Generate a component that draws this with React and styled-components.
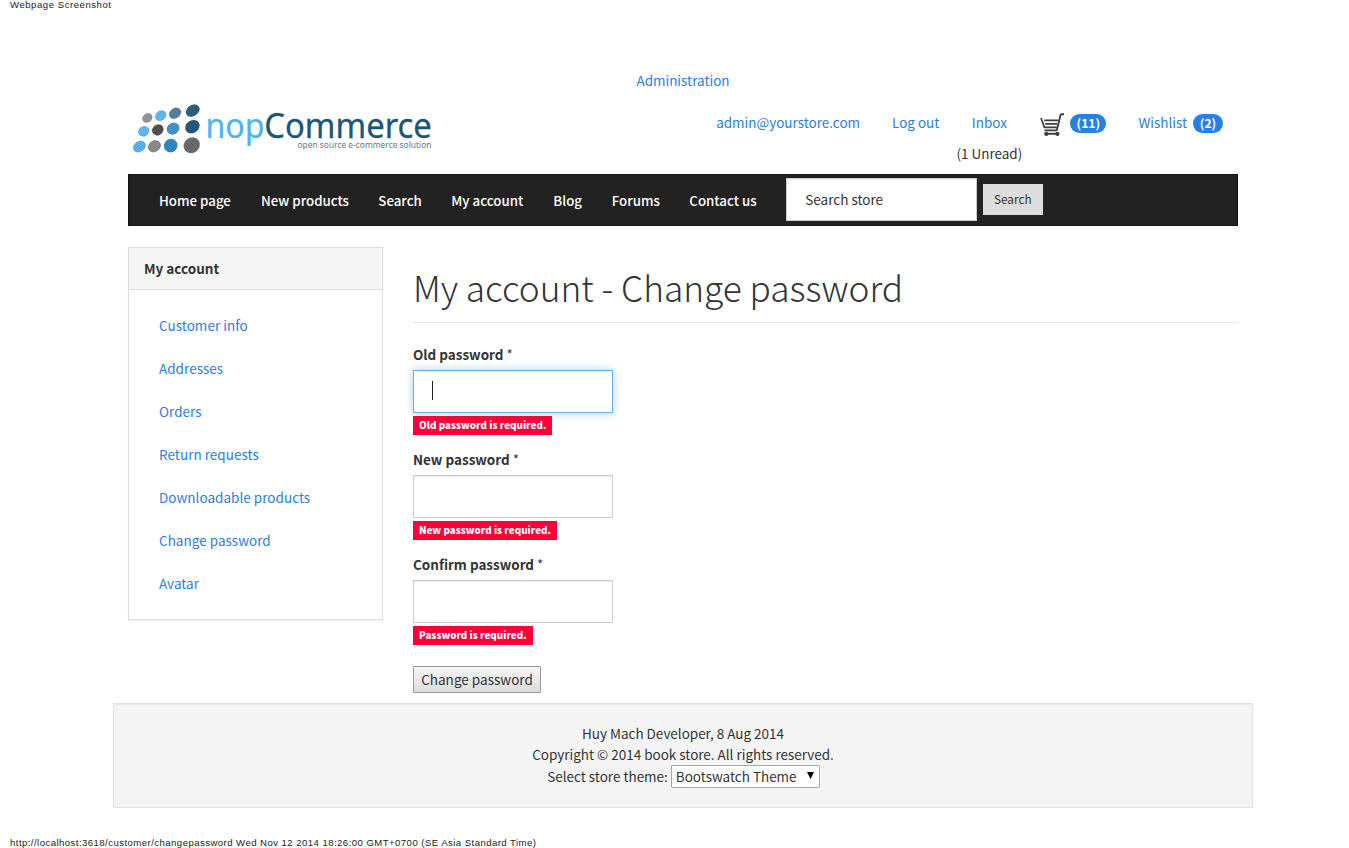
import React from 'react';
import styled, { createGlobalStyle } from 'styled-components';

const GlobalStyle = createGlobalStyle`
  * { box-sizing: border-box; }
  body {
    margin: 0;
    background: #fff;
    color: #333;
    font-family: 'Noto Sans CJK SC', 'Open Sans', sans-serif;
    font-size: 13.48px;
    line-height: 21px;
    overflow: hidden;
  }
  button, input, select { font-family: inherit; color: #333; }
`;

const Page = styled.div`
  display: flex;
  flex-direction: column;
  width: 1366px;
  height: 848px;
`;

const PrintNote = styled.div`
  padding-left: 10px;
  font-family: 'Liberation Sans', Arial, sans-serif;
  font-size: 9.6px;
  line-height: 10px;
  letter-spacing: ${(p) => p.$tracking}px;
  white-space: nowrap;
  color: #222;
`;

const Container = styled.div`
  width: 1140px;
  margin: 0 auto;
  padding: 0 15px;
`;

const AdminBar = styled.div`
  display: flex;
  justify-content: center;
  padding-top: 60px;
`;

const Link = styled.a`
  color: #2b7de2;
  text-decoration: none;
  white-space: nowrap;
  letter-spacing: ${(p) => (p.$loose ? '0.04px' : 'normal')};
`;

const Header = styled.header`
  display: flex;
  justify-content: space-between;
  align-items: flex-start;
  height: 83px;
  padding: 11px 15px 0 5px;
`;

const Logo = styled.svg`
  display: block;
  width: 300px;
  height: 54px;
  overflow: visible;
`;

const HeaderLinks = styled.nav`
  display: flex;
  align-items: flex-start;
  gap: 32px;
  padding-top: 10px;
`;

const InboxLink = styled.div`
  display: flex;
  flex-direction: column;
  align-items: center;
  gap: 10px;
  width: 66px;
  margin: 0 -14px 0 -15px;
`;

const CountLink = styled.div`
  display: flex;
  align-items: flex-start;
  gap: 6px;
  color: #2780e3;
`;

const Badge = styled.span`
  width: ${(p) => p.$w}px;
  height: 19px;
  margin-top: 2px;
  border-radius: 10px;
  background: #2780e3;
  color: #fff;
  font-size: 12.2px;
  font-weight: 700;
  line-height: 18px;
  text-align: center;
`;

const CartIcon = styled.svg`
  width: 24px;
  height: 24px;
  margin-top: 1px;
`;

const NavBar = styled.nav`
  display: flex;
  align-items: flex-start;
  height: 52px;
  padding: 3px 0 0 30px;
  border: 1px solid #111;
  background: #222;
  color: #fff;
`;

const Menu = styled.div`
  display: flex;
  gap: 30px;
  padding-top: 12px;
  font-weight: 500;
  font-size: 13.3px;
  white-space: nowrap;
`;

const MenuItem = styled.span`
  width: ${(p) => p.$w}px;
`;

const SearchInput = styled.input`
  width: 191px;
  height: 43px;
  margin-left: 29px;
  padding: 0 18px 1px 18.5px;
  border: 1px solid #ccc;
  border-radius: 0;
  background: #fff;
  box-shadow: inset 0 1px 1px rgba(0, 0, 0, 0.075);
  font-size: 13.5px;
`;

const SearchButton = styled.button`
  width: 60px;
  height: 31px;
  margin: 6px 0 0 6px;
  padding: 0 0 1px;
  border: 0;
  background: #ddd;
  font-size: 11.75px;
  line-height: 30px;
`;

const Columns = styled.div`
  display: flex;
  align-items: flex-start;
  gap: 30px;
  height: 477px;
  padding-top: 21px;
`;

const Panel = styled.aside`
  width: 255px;
  border: 1px solid #ddd;
  box-shadow: 0 1px 1px rgba(0, 0, 0, 0.05);
`;

const PanelTitle = styled.div`
  height: 42px;
  padding: 10px 15px;
  border-bottom: 1px solid #ddd;
  background: #f5f5f5;
  font-weight: 700;
  font-size: 13.5px;
`;

const PanelList = styled.div`
  display: flex;
  flex-direction: column;
  gap: 22px;
  padding: 25px 30px 25px;
`;

const Main = styled.main`
  width: 825px;
`;

const Title = styled.h1`
  height: 58px;
  margin: 18px 0 21px;
  border-bottom: 1px solid #e6e6e6;
  font-size: 35.25px;
  font-weight: 300;
  line-height: 43px;
  white-space: nowrap;
`;

const Field = styled.div`
  display: flex;
  flex-direction: column;
  align-items: flex-start;
  height: 105px;
`;

const Label = styled.label`
  height: 26px;
  line-height: 21px;
`;

const LabelText = styled.b`
  font-weight: 700;
`;

const Control = styled.div`
  display: flex;
  align-items: center;
  width: 200px;
  height: 43px;
  padding-left: 18px;
  border: 1px solid ${(p) => (p.$focused ? '#66afe9' : '#ccc')};
  box-shadow: inset 0 1px 1px rgba(0, 0, 0, 0.075)
    ${(p) => (p.$focused ? ', 0 0 8px rgba(102, 175, 233, 0.6)' : '')};
`;

const Caret = styled.span`
  width: 1px;
  height: 19px;
  margin-top: -2px;
  background: #222;
`;

const ErrorLabel = styled.span`
  height: 19px;
  margin-top: 3px;
  padding: 0 6px;
  background: #ff0039;
  color: #fff;
  font-size: 9.85px;
  font-weight: 900;
  line-height: 18px;
  white-space: nowrap;
`;

const SubmitButton = styled.button`
  display: block;
  width: 128px;
  height: 27px;
  margin-top: 7px;
  padding: 0;
  border: 1px solid #999;
  border-radius: 1px;
  background: linear-gradient(#f6f6f6, #ddd);
  font-size: 13.55px;
  line-height: 25px;
`;

const Footer = styled.footer`
  display: flex;
  flex-direction: column;
  align-items: center;
  width: 1140px;
  height: 105px;
  margin: 0 auto;
  padding-top: 19px;
  border: 1px solid #e1e1e1;
  background: #f4f4f4;
  box-shadow: inset 0 1px 1px rgba(0, 0, 0, 0.05);
`;

const ThemeRow = styled.div`
  display: flex;
  gap: 3px;
  padding-left: 1px;
  line-height: 23px;
`;

const ThemeSelect = styled.div`
  display: flex;
  justify-content: space-between;
  width: 149px;
  height: 23px;
  padding: 0 5px 0 4px;
  border: 1px solid #a9a9a9;
  border-radius: 1px;
  background: #fff;
  line-height: 21px;
`;

const Arrow = styled.svg`
  width: 7px;
  height: 7px;
  margin-top: 6px;
`;

const FooterNote = styled.div`
  padding-top: 30px;
`;

const DOTS = [
  [57, 52, 15.5, 13, '#8f9296'],
  [97, 45, 17.5, 14, '#5ab8f5'],
  [140, 38, 19, 15, '#4c7c9b'],
  [193, 30, 22, 16.5, '#25587c'],
  [46, 92, 17, 14.5, '#5ab8f5'],
  [88, 88, 18, 15.5, '#4b4b4b'],
  [134, 84, 19.5, 17, '#3a8fc8'],
  [192, 78, 22.5, 18.5, '#1d5276'],
  [33, 138, 20, 15.5, '#4fb2f3'],
  [78, 137, 20, 16.5, '#868686'],
  [127, 135, 20.5, 19.5, '#2485c2'],
  [190, 134, 25, 22.5, '#656565'],
];

const MENU = [
  ['Home page', 72],
  ['New products', 87.3],
  ['Search', 43],
  ['My account', 72],
  ['Blog', 28.5],
  ['Forums', 47.5],
  ['Contact us', 67.5],
];

const ACCOUNT_LINKS = [
  'Customer info',
  'Addresses',
  'Orders',
  'Return requests',
  'Downloadable products',
  'Change password',
  'Avatar',
];

const FIELDS = [
  { label: 'Old password', error: 'Old password is required.', focused: true },
  { label: 'New password', error: 'New password is required.' },
  { label: 'Confirm password', error: 'Password is required.' },
];

function StoreLogo() {
  return (
    <Logo viewBox="0 0 300 54">
      <defs>
        <pattern id="grain" width="2" height="2" patternUnits="userSpaceOnUse">
          <rect width="1" height="1" fill="#fff" opacity="0.16" />
          <rect x="1" y="1" width="1" height="1" fill="#000" opacity="0.1" />
        </pattern>
      </defs>
      {DOTS.map(([x, y, rx, ry, fill]) => {
        const cx = x / 3 - 4.6;
        const cy = y / 3 - 1.4;
        const shape = { cx, cy, rx: rx / 3, ry: ry / 3, transform: `rotate(-35 ${cx} ${cy})` };
        return (
          <g key={`${x}-${y}`}>
            <ellipse {...shape} fill={fill} stroke="#444" strokeOpacity="0.3" strokeWidth="0.5" />
            <ellipse {...shape} fill="url(#grain)" />
          </g>
        );
      })}
      <g fontFamily="'Noto Sans', sans-serif" fontSize="34">
        <text x="72.5" y="36" fill="#4ab4f4" stroke="#4ab4f4" strokeWidth="0.2" textLength="59" lengthAdjust="spacingAndGlyphs">nop</text>
        <text x="131.3" y="36" fill="#1d5577" stroke="#1d5577" strokeWidth="0.3" textLength="167.5" lengthAdjust="spacingAndGlyphs">Commerce</text>
        <text x="164.5" y="46" fontSize="9.2" fill="#6d767c" textLength="134" lengthAdjust="spacingAndGlyphs">open source e-commerce solution</text>
      </g>
    </Logo>
  );
}

function Cart() {
  return (
    <CartIcon viewBox="0 0 24 24" fill="none" stroke="#3d3d3d" strokeWidth="1.9">
      <path d="M24 1.2h-2.6q-.7 0-.9.8L17 16.6q-.2.8-1 .8H4.5" />
      <path d="M1 5l3.4 9.4h12.4" strokeWidth="1.7" />
      <path d="M4.2 7.4h14M5.2 10.8h12.2" strokeWidth="1.7" />
      <path d="M6.5 20.8h11" />
      <circle cx="6.3" cy="20.9" r="2.1" fill="#3d3d3d" stroke="none" />
      <circle cx="17.4" cy="20.9" r="2.1" fill="#3d3d3d" stroke="none" />
    </CartIcon>
  );
}

export default function App() {
  return (
    <>
      <GlobalStyle />
      <Page>
        <PrintNote $tracking={0.52}>Webpage Screenshot</PrintNote>
        <Container>
          <AdminBar><Link>Administration</Link></AdminBar>
          <Header>
            <StoreLogo />
            <HeaderLinks>
              <Link>admin@yourstore.com</Link>
              <Link>Log out</Link>
              <InboxLink>
                <Link>Inbox</Link>
                <span>(1 Unread)</span>
              </InboxLink>
              <CountLink><Cart /><Badge $w={36}>(11)</Badge></CountLink>
              <CountLink><Link>Wishlist</Link><Badge $w={30}>(2)</Badge></CountLink>
            </HeaderLinks>
          </Header>
          <NavBar>
            <Menu>
              {MENU.map(([name, w]) => <MenuItem key={name} $w={w}>{name}</MenuItem>)}
            </Menu>
            <SearchInput defaultValue="Search store" />
            <SearchButton>Search</SearchButton>
          </NavBar>
          <Columns>
            <Panel>
              <PanelTitle>My account</PanelTitle>
              <PanelList>
                {ACCOUNT_LINKS.map((name) => <Link key={name} $loose>{name}</Link>)}
              </PanelList>
            </Panel>
            <Main>
              <Title>My account - Change password</Title>
              {FIELDS.map(({ label, error, focused }) => (
                <Field key={label}>
                  <Label><LabelText>{label}</LabelText> *</Label>
                  <Control $focused={focused}>{focused && <Caret />}</Control>
                  <ErrorLabel>{error}</ErrorLabel>
                </Field>
              ))}
              <SubmitButton>Change password</SubmitButton>
            </Main>
          </Columns>
        </Container>
        <Footer>
          <div>Huy Mach Developer, 8 Aug 2014</div>
          <div>Copyright © 2014 book store. All rights reserved.</div>
          <ThemeRow>
            <span>Select store theme:</span>
            <ThemeSelect>
              Bootswatch Theme
              <Arrow viewBox="0 0 7 7"><path d="M0 0h7L3.5 7z" fill="#000" /></Arrow>
            </ThemeSelect>
          </ThemeRow>
        </Footer>
        <FooterNote>
          <PrintNote $tracking={0.44}>
            http://localhost:3618/customer/changepassword Wed Nov 12 2014 18:26:00 GMT+0700 (SE Asia Standard Time)
          </PrintNote>
        </FooterNote>
      </Page>
    </>
  );
}
